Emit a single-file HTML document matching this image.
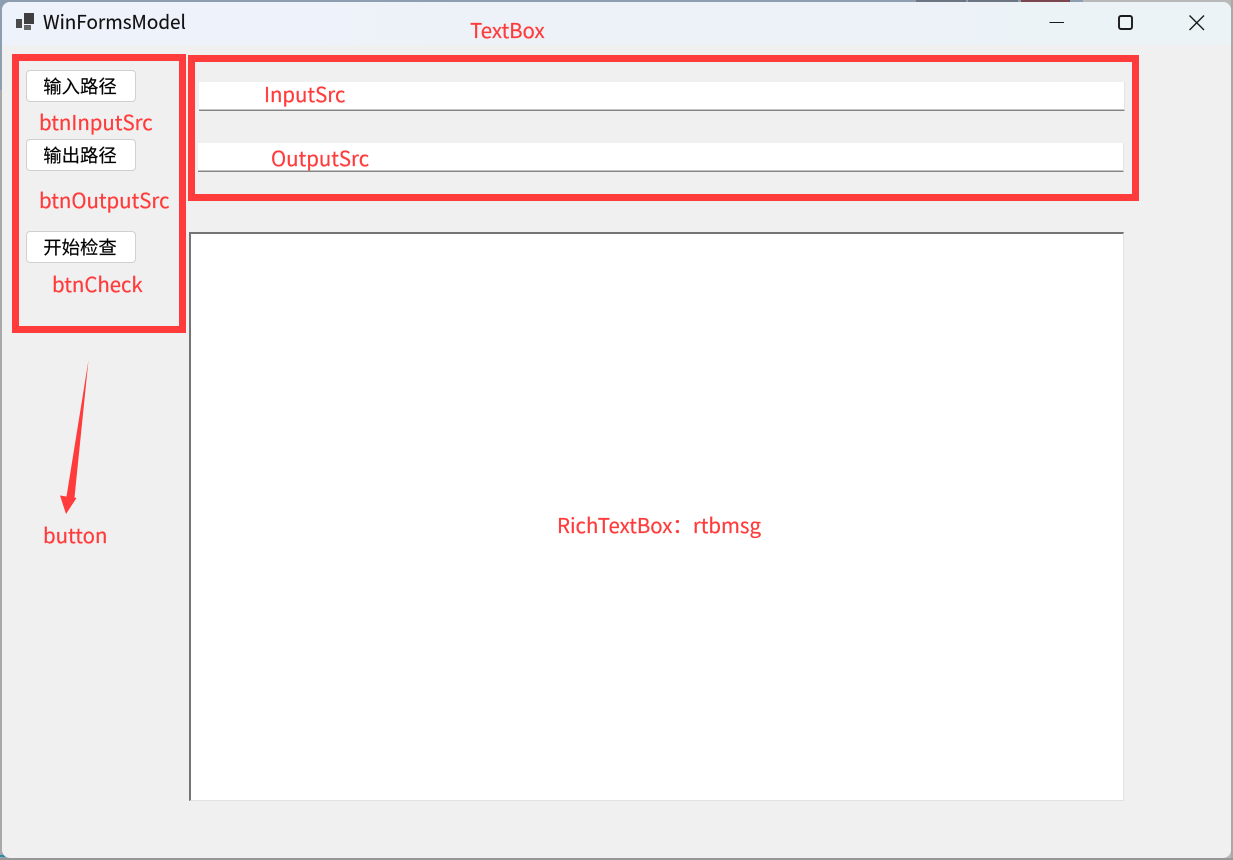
<!DOCTYPE html>
<html>
<head>
<meta charset="utf-8">
<style>
html,body{margin:0;padding:0;width:1233px;height:860px;overflow:hidden;background:#fff}
#bg{position:absolute;left:0;top:0;width:1233px;height:860px;background:#8d9eb0;overflow:hidden}
.abs{position:absolute;box-sizing:border-box}
#win{position:absolute;left:2px;top:2px;width:1229px;height:856px;background:#f0f0f0;border-radius:8px;overflow:hidden}
#title{position:absolute;left:0;top:0;width:1229px;height:43px;background:linear-gradient(90deg,#eef2fb 0%,#edf2f8 50%,#ebf3f6 100%)}
.frame{position:absolute;box-sizing:border-box;border:7px solid #ff3b3b}
.t{position:absolute;white-space:nowrap;font-family:"Noto Sans CJK SC","Liberation Sans",sans-serif;font-size:20.4px;line-height:26px;color:#ff3b3b;-webkit-text-stroke:.2px #ff3b3b}
.btn{position:absolute;box-sizing:border-box;left:26px;width:110px;height:32px;padding-right:2px;background:#fff;border:1px solid #d0d0d0;border-radius:4px;font-family:"Noto Sans CJK SC","WenQuanYi Zen Hei",sans-serif;font-size:18.4px;line-height:30px;text-align:center;color:#000;-webkit-text-stroke:.15px #000}
.tb{position:absolute;box-sizing:border-box;width:926px;height:29px;background:#fff;border-right:1px solid #e4e4e4;border-bottom:1px solid #858585;box-shadow:inset 0 -1px 0 #c4c4c4}
</style>
</head>
<body>
<div id="bg">
  <div class="abs" style="left:916px;top:0;width:50px;height:2px;background:#a9b3bc;border:1px solid #6b7682"></div>
  <div class="abs" style="left:968px;top:0;width:50px;height:2px;background:#a9b3bc;border:1px solid #6b7682"></div>
  <div class="abs" style="left:1021px;top:0;width:49px;height:2px;background:#7c4650"></div>
  <div class="abs" style="left:1083px;top:0;width:150px;height:860px;background:#b9b9b9"></div>
  <div class="abs" style="left:1231px;top:0;width:2px;height:860px;background:#a8a8a8"></div>
  <div class="abs" style="left:0;top:90px;width:2px;height:770px;background:#a9a9a9"></div>
  <div class="abs" style="left:0;top:858px;width:1233px;height:2px;background:#979797"></div>
  <div class="abs" style="left:0;top:855px;width:5px;height:2px;background:#2d8aa5"></div>
  <div id="win"><div id="title"></div></div>

  <svg class="abs" style="left:0;top:0" width="50" height="40" viewBox="0 0 50 40">
    <rect x="16" y="19" width="6" height="9" fill="#4a4a4a"/>
    <rect x="24" y="13" width="10" height="11" fill="#3f3f3f"/>
    <rect x="24" y="25" width="7" height="5" fill="#666"/>
  </svg>
  <div class="t" style="left:43px;top:9px;color:#111;-webkit-text-stroke:.15px #111;font-size:18.9px">WinFormsModel</div>

  <svg class="abs" style="left:1040px;top:8px" width="180" height="30" viewBox="0 0 180 30" fill="none" stroke="#1a1a1a">
    <path d="M9.5 14.5H24" stroke-width="1"/>
    <rect x="79" y="8" width="13" height="13" rx="2" stroke-width="1.9"/>
    <path d="M149.5 7.5L164 22M164 7.5L149.5 22" stroke-width="1.4"/>
  </svg>

  <div class="frame" style="left:12px;top:54px;width:174px;height:279px"></div>
  <div class="frame" style="left:188px;top:55px;width:951px;height:146px"></div>

  <div class="btn" style="top:70px">输入路径</div>
  <div class="btn" style="top:139px">输出路径</div>
  <div class="btn" style="top:231px">开始检查</div>

  <div class="tb" style="left:199px;top:82px"></div>
  <div class="tb" style="left:198px;top:143px"></div>

  <div class="abs" style="left:189px;top:232px;width:935px;height:569px;background:#fff;border-top:2px solid #747474;border-left:2px solid #747474;border-right:1px solid #e2e2e2;border-bottom:1px solid #e2e2e2"></div>

  <div class="t" style="left:470px;top:16px">TextBox</div>
  <div class="t" style="left:264px;top:80px">InputSrc</div>
  <div class="t" style="left:271px;top:144px">OutputSrc</div>
  <div class="t" style="left:39px;top:108px">btnInputSrc</div>
  <div class="t" style="left:39px;top:186px">btnOutputSrc</div>
  <div class="t" style="left:52px;top:270px">btnCheck</div>
  <div class="t" style="left:43px;top:521px">button</div>
  <div class="t" style="left:557px;top:511px">RichTextBox：rtbmsg</div>

  <svg class="abs" style="left:0;top:350px" width="100" height="170" viewBox="0 350 100 170">
    <path d="M88.5 360L74.5 497.5L76.5 498L66 514L60 495.5L66.5 496.5Z" fill="#ff3b3b"/>
  </svg>
</div>
</body>
</html>
